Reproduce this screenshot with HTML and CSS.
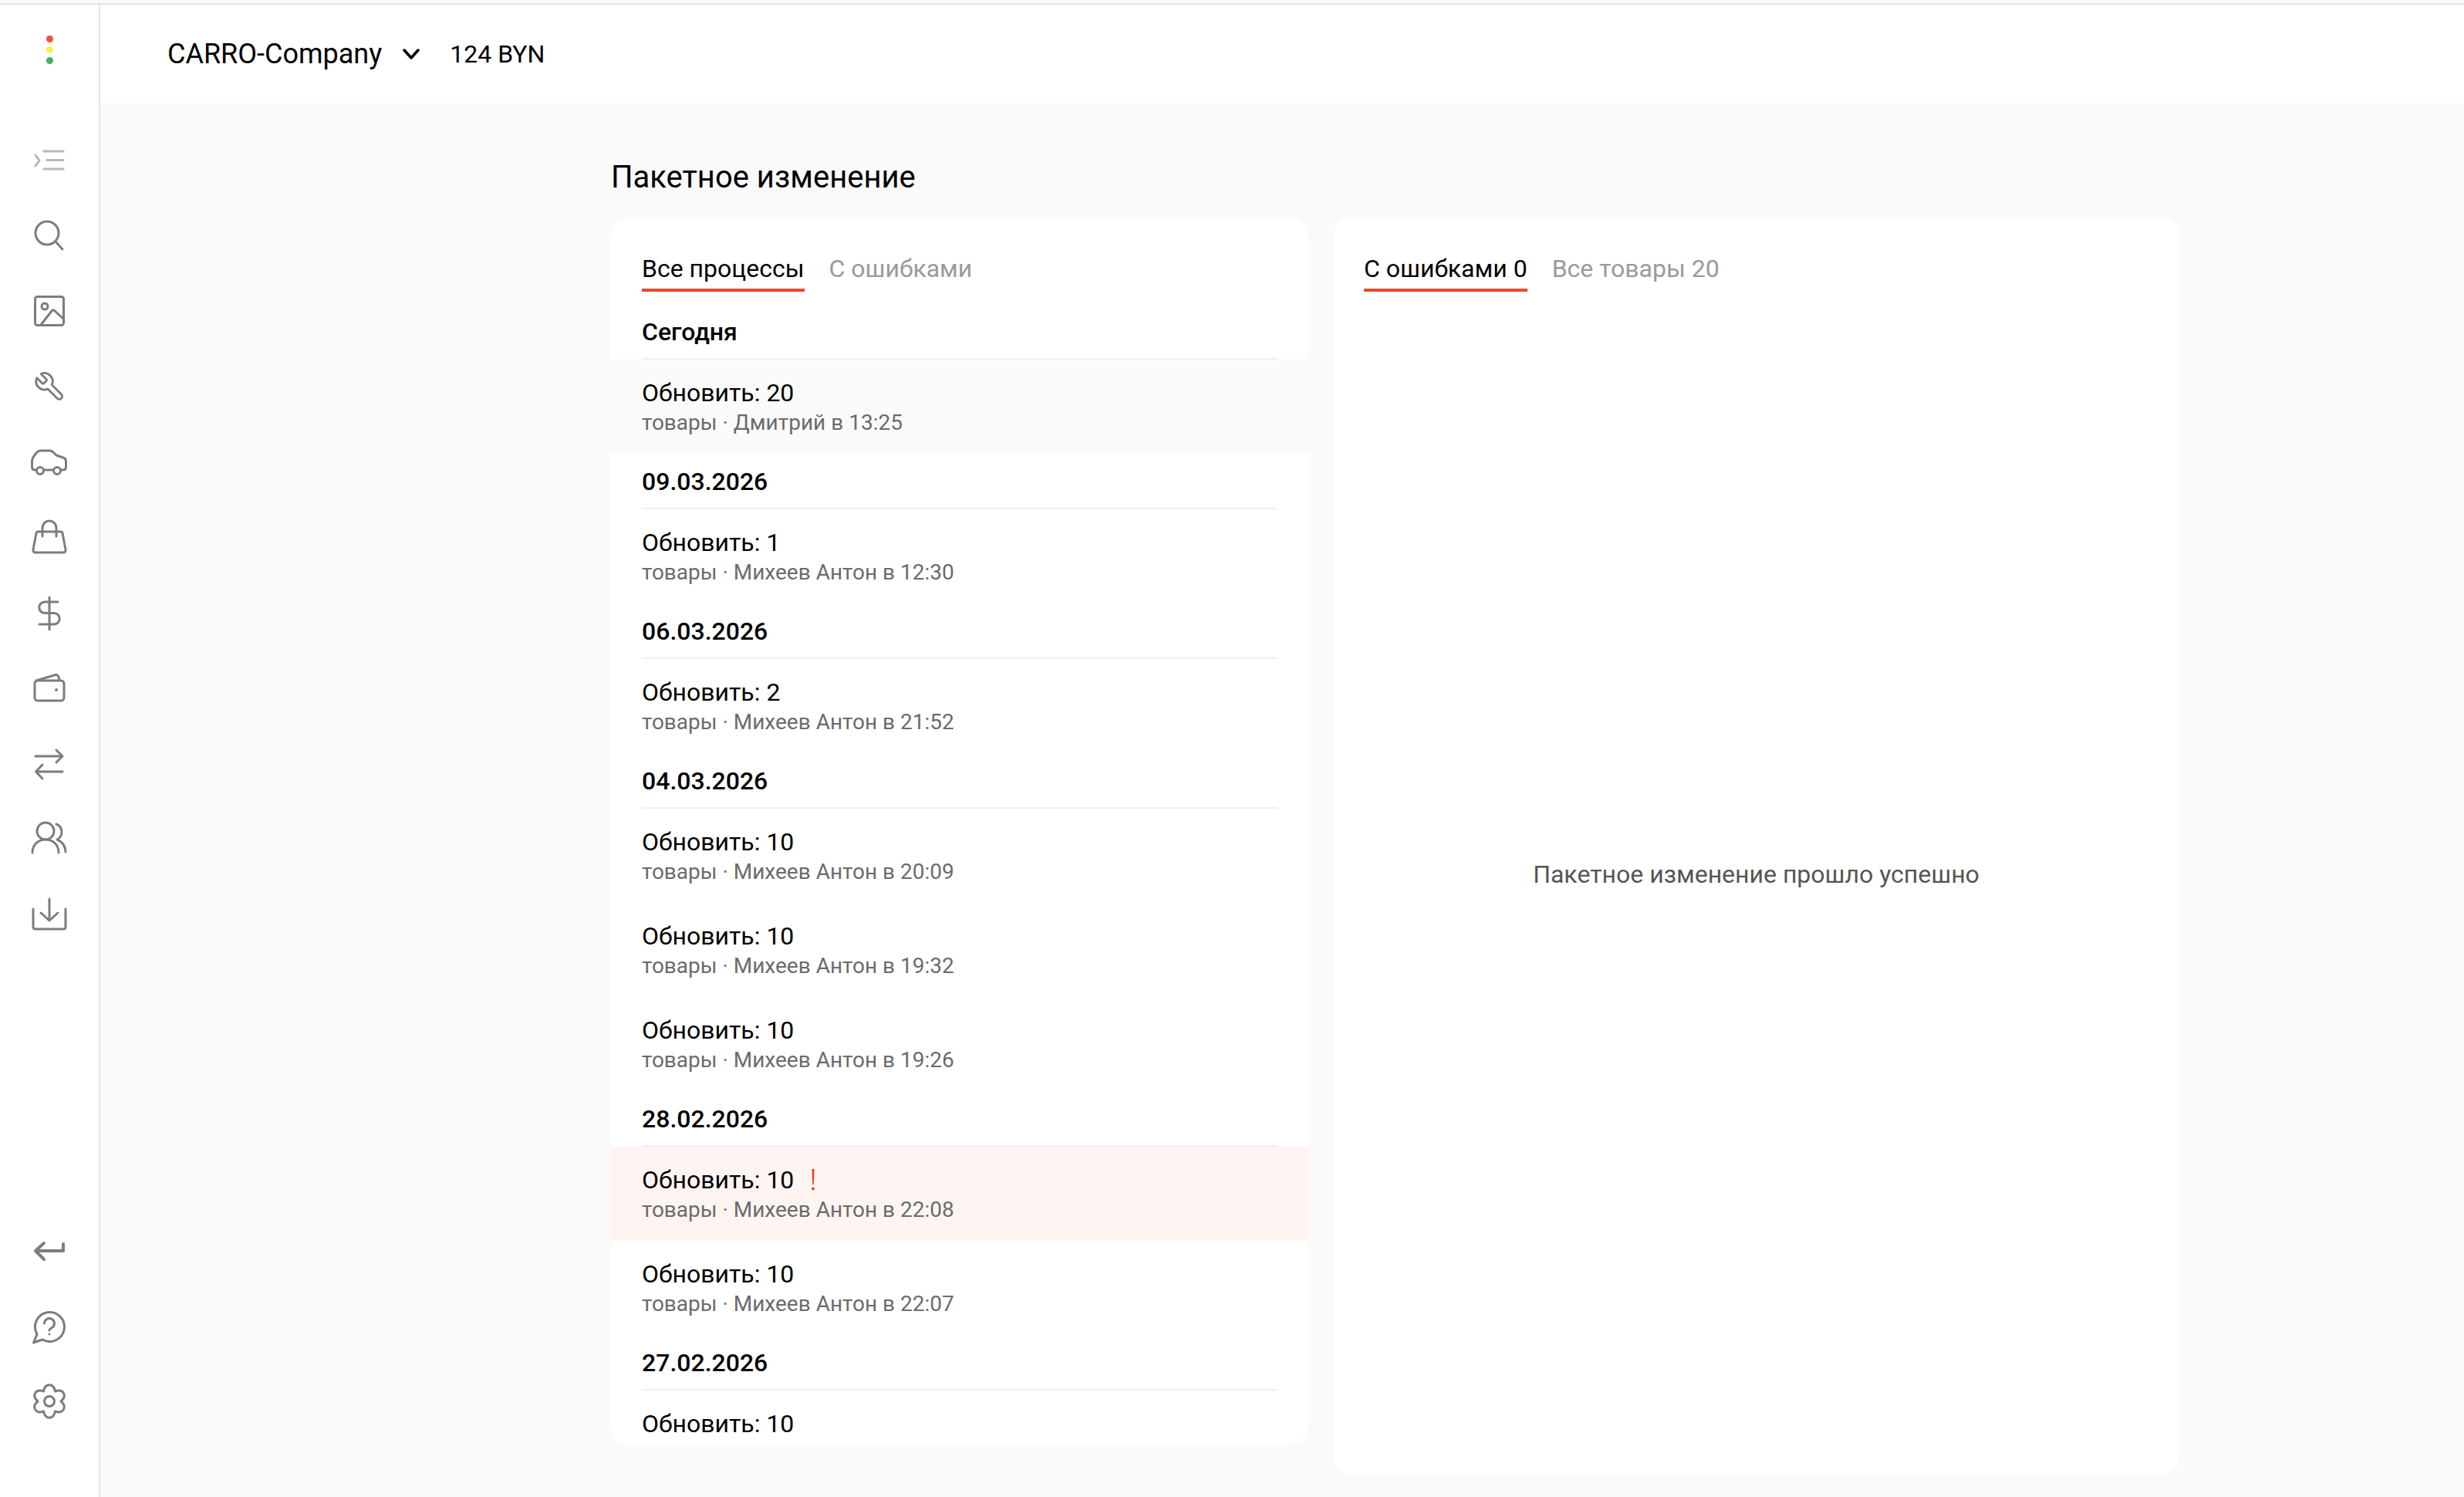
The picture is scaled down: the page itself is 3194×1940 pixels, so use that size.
FILE: index.html
```html
<!DOCTYPE html>
<html lang="ru">
<head>
<meta charset="utf-8">
<title>Пакетное изменение</title>
<link rel="stylesheet" href="styles.css">
</head>
<body>
<div class="app">
  <aside class="sidebar">
    <div class="logo"><i class="dot red"></i><i class="dot yellow"></i><i class="dot green"></i></div>
    <nav class="nav">
      <a class="nav-item muted"><svg class="icon" viewBox="0 0 48 48"><path d="M17 12H42M21 23.500H42M17 35H42M6 17L11 24L6 31"/></svg></a>
      <a class="nav-item"><svg class="icon" viewBox="0 0 48 48"><circle cx="21" cy="21" r="15"/><path d="M32 32L41 42"/></svg></a>
      <a class="nav-item"><svg class="icon" viewBox="0 0 48 48"><rect x="5.500" y="5.500" width="37" height="37" rx="3"/><circle cx="18" cy="18" r="4"/><path d="M13 42L27 24Q29 21.500 31 24L42 34"/></svg></a>
      <a class="nav-item"><svg class="icon" viewBox="0 0 48 48"><g transform="translate(46 3) scale(-1.78 1.78)"><path class="fine" d="M14.700 6.300a1 1 0 0 0 0 1.400l1.600 1.600a1 1 0 0 0 1.400 0l3.770-3.770a6 6 0 0 1-7.940 7.940l-6.910 6.910a2.120 2.120 0 0 1-3-3l6.910-6.910a6 6 0 0 1 7.940-7.940l-3.760 3.760z"/></g></svg></a>
      <a class="nav-item"><svg class="icon" viewBox="0 0 48 48"><path d="M7.500 35H5Q1.500 35 1.500 31V24Q1.500 20 4 17L8 12Q10 10 13 10H24Q27 10 29 12L33 16L42 19Q45.500 20 45.500 24V31Q45.500 35 42 35H38.500M16.500 35H29.500"/><circle cx="12" cy="36" r="4.500"/><circle cx="34" cy="36" r="4.500"/></svg></a>
      <a class="nav-item"><svg class="icon" viewBox="0 0 48 48"><path d="M9 17H39Q40.500 17 41 19L45 40Q45.500 44 42 44H6Q2.500 44 3 40L7 19Q7.500 17 9 17ZM15 23V12A9 9 0 0 1 33 12V23"/></svg></a>
      <a class="nav-item"><svg class="icon" viewBox="0 0 48 48"><path d="M35 11H18A7.250 7.250 0 0 0 18 25.500H30A7.250 7.250 0 0 1 30 40H11M24 5V48"/></svg></a>
      <a class="nav-item"><svg class="icon" viewBox="0 0 48 48"><rect x="5" y="15" width="38" height="26" rx="4"/><path d="M7 15L32 7.500Q36 7 37 14"/><circle class="solid" cx="33" cy="27" r="2"/></svg></a>
      <a class="nav-item"><svg class="icon" viewBox="0 0 48 48"><path d="M6 15H41M33 7L41 15L33 23M41 35H7M15 26L6.500 35L15 44"/></svg></a>
      <a class="nav-item"><svg class="icon" viewBox="0 0 48 48"><circle cx="19" cy="15" r="11"/><path d="M2 43C2 32 10 26 19 26C28 26 36 32 36 43M33 6A11 11 0 0 1 34 26C41 29 45 35 45 42"/></svg></a>
      <a class="nav-item"><svg class="icon" viewBox="0 0 48 48"><path d="M3 18V41Q3 44 6 44H42Q45 44 45 41V18M24 5V33M13 23L24 33L35 23"/></svg></a>
    </nav>
    <nav class="nav nav-bottom">
      <a class="nav-item"><svg class="icon bold" viewBox="0 0 48 48"><path d="M42 15V24H6M17 14L6 24L17 35"/></svg></a>
      <a class="nav-item"><svg class="icon" viewBox="0 0 48 48"><path d="M8 34L3.500 45L15 41A19 19 0 1 0 8 34ZM17.500 20A6.500 6.500 0 1 1 27.500 25.500Q24 27.500 24 29"/><circle class="solid" cx="24" cy="34" r="1.500"/></svg></a>
      <a class="nav-item"><svg class="icon" viewBox="0 0 48 48"><path d="M16.500 11C18.500 0 29.500 0 31.500 11C42.030 7.240 47.530 16.760 39 24C47.530 31.240 42.030 40.760 31.500 37C29.500 48 18.500 48 16.500 37C5.970 40.760 .47 31.240 9 24C.47 16.760 5.970 7.240 16.500 11Z"/><circle cx="24" cy="24" r="6.500"/></svg></a>
    </nav>
  </aside>
  <div class="main">
    <header class="topbar">
      <span class="company">CARRO-Company</span>
      <svg class="chevron" viewBox="0 0 22 14"><path d="M2 2L11 12L20 2"/></svg>
      <span class="balance">124 BYN</span>
    </header>
    <main class="content">
      <h1 class="title">Пакетное изменение</h1>
      <div class="columns">
        <section class="card card-list">
          <div class="tabs tabs-list">
            <span class="tab active">Все процессы</span>
            <span class="tab">С ошибками</span>
          </div>
          <div class="group-head">Сегодня</div>
          <div class="row selected"><div class="row-title">Обновить: 20</div><div class="row-sub">товары · Дмитрий в 13:25</div></div>
          <div class="group-head">09.03.2026</div>
          <div class="row"><div class="row-title">Обновить: 1</div><div class="row-sub">товары · Михеев Антон в 12:30</div></div>
          <div class="group-head">06.03.2026</div>
          <div class="row"><div class="row-title">Обновить: 2</div><div class="row-sub">товары · Михеев Антон в 21:52</div></div>
          <div class="group-head">04.03.2026</div>
          <div class="row"><div class="row-title">Обновить: 10</div><div class="row-sub">товары · Михеев Антон в 20:09</div></div>
          <div class="row"><div class="row-title">Обновить: 10</div><div class="row-sub">товары · Михеев Антон в 19:32</div></div>
          <div class="row"><div class="row-title">Обновить: 10</div><div class="row-sub">товары · Михеев Антон в 19:26</div></div>
          <div class="group-head">28.02.2026</div>
          <div class="row failed"><div class="row-title">Обновить: 10<svg class="alert" viewBox="0 0 8 28"><path d="M2.400 0H5.600L4.800 20H3.200Z"/><circle cx="4" cy="25.500" r="2"/></svg></div><div class="row-sub">товары · Михеев Антон в 22:08</div></div>
          <div class="row"><div class="row-title">Обновить: 10</div><div class="row-sub">товары · Михеев Антон в 22:07</div></div>
          <div class="group-head">27.02.2026</div>
          <div class="row"><div class="row-title">Обновить: 10</div></div>
        </section>
        <section class="card card-detail">
          <div class="tabs">
            <span class="tab active">С ошибками 0</span>
            <span class="tab">Все товары 20</span>
          </div>
          <div class="empty">Пакетное изменение прошло успешно</div>
        </section>
      </div>
    </main>
  </div>
</div>
</body>
</html>
```
FILE: styles.css
```css
* { box-sizing: border-box; }
html, body { margin: 0; height: 100%; }
body {
  font-family: Roboto, "Liberation Sans", sans-serif;
  color: #000;
  background: #fafafa;
  overflow: hidden;
}
.app {
  display: flex;
  height: 1940px;
  border-top: 2px solid #e4e4e4;
  padding-top: 0;
  margin-top: 4px;
  background: #fafafa;
}
.sidebar {
  width: 130px;
  flex: none;
  display: flex;
  flex-direction: column;
  background: #fff;
  border-right: 2px solid #e4e4e4;
  padding-bottom: 75px;
  height: 1934px;
}
.logo {
  display: flex;
  flex-direction: column;
  align-items: center;
  gap: 5px;
  padding-top: 40px;
  height: 153px;
}
.dot { display: block; width: 9px; height: 9px; border-radius: 50%; }
.red { background: #f4513a; }
.yellow { background: #f8ee4e; }
.green { background: #3db35f; }
.nav { display: flex; flex-direction: column; }
.nav-bottom { margin-top: auto; }
.nav-item {
  display: flex;
  align-items: center;
  justify-content: center;
  height: 97.600px;
}
.icon {
  width: 48px;
  height: 48px;
  fill: none;
  stroke: #7d7d7d;
  stroke-width: 3;
  stroke-linecap: round;
  stroke-linejoin: round;
}
.icon .fine { stroke-width: 1.600; }
.icon .solid { fill: #7d7d7d; stroke: none; }
.icon.bold { stroke-width: 4; }
.muted .icon { stroke: #b8b8b8; }
.main { flex: 1; display: flex; flex-direction: column; min-width: 0; }
.topbar {
  height: 128px;
  flex: none;
  background: #fff;
  display: flex;
  align-items: center;
  padding-left: 87px;
  font-size: 36px;
}
.company { margin-right: 27px; }
.chevron {
  width: 22px;
  height: 14px;
  fill: none;
  stroke: #000;
  stroke-width: 3.500;
  stroke-linecap: round;
  stroke-linejoin: round;
  margin-right: 39px;
}
.balance { font-size: 32px; }
.content { padding: 72px 0 0 662px; }
.title {
  margin: 0 0 28px;
  font-size: 40px;
  line-height: 48px;
  font-weight: 400;
}
.columns { display: flex; gap: 32px; align-items: flex-start; }
.card { background: #fff; border-radius: 24px; overflow: hidden; }
.card-list { width: 904px; height: 1590px; }
.card-detail { width: 1097px; height: 1628px; display: flex; flex-direction: column; }
.tabs { display: flex; gap: 32px; padding: 46px 40px 0; flex: none; }
.tabs-list { margin-bottom: 16px; }
.tab {
  font-size: 32px;
  line-height: 40px;
  color: #9a9a9a;
  padding-bottom: 6px;
  border-bottom: 4px solid transparent;
}
.tab.active { color: #000; border-bottom-color: #f0452c; }
.group-head {
  height: 72px;
  margin: 0 40px;
  padding-top: 16px;
  font-size: 32px;
  line-height: 40px;
  font-weight: 500;
  border-bottom: 2px solid #efefef;
}
.row { height: 122px; padding: 23px 40px 0; }
.selected { background: #fafafa; }
.failed { background: #fef5f3; }
.row-title { font-size: 32px; line-height: 40px; display: flex; align-items: center; }
.row-sub { font-size: 28px; line-height: 36px; margin-top: 1px; color: #6b6b6b; }
.alert { width: 8px; height: 28px; fill: #f0452c; margin-left: 21px; }
.empty {
  flex: 1;
  display: flex;
  align-items: center;
  justify-content: center;
  padding-bottom: 22px;
  font-size: 32px;
  color: #555;
}
```
